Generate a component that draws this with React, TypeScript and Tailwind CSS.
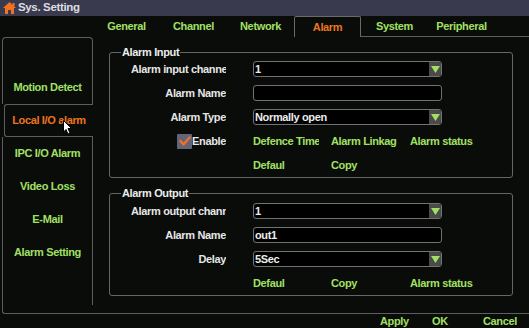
import React from "react";

const G = "text-[#a2e063]";
const LINE = "border-[#5e5e5e]";

function Arrow() {
  return (
    <div className="w-[12px] h-full bg-[#4a4a4a] flex items-center justify-center shrink-0">
      <svg width="9" height="7" viewBox="0 0 9 7">
        <polygon points="0,0 9,0 4.5,7" fill="#a2e063" />
      </svg>
    </div>
  );
}

function Field({ text, arrow }: { text?: string; arrow?: boolean }) {
  return (
    <div className="h-[16px] w-[189px] border border-[#727272] rounded-[3px] bg-black flex items-center overflow-hidden">
      <span className="flex-1 pl-[1px] text-[#ececec] whitespace-nowrap">{text}</span>
      {arrow && <Arrow />}
    </div>
  );
}

function Row({ label, children }: { label: React.ReactNode; children: React.ReactNode }) {
  return (
    <div className="h-[24px] flex items-center">
      <div className="w-[116px] pl-[21px] shrink-0">
        <div className="overflow-hidden whitespace-nowrap text-right text-[#e6e6e6]">{label}</div>
      </div>
      <div className="ml-[27px] flex items-center">{children}</div>
    </div>
  );
}

function GreenRow({ items }: { items: string[] }) {
  const widths = ["w-[66px] mr-[12px]", "w-[66px] mr-[13px]", "w-[80px]"];
  return (
    <div className="h-[24px] flex items-center">
      <div className="w-[116px] shrink-0" />
      <div className="ml-[27px] flex items-center">
        {items.map((t, i) => (
          <div key={i} className={`${widths[i]} overflow-hidden whitespace-nowrap ${G}`}>
            {t}
          </div>
        ))}
      </div>
    </div>
  );
}

function Fieldset({ title, pt, children }: { title: string; pt: string; children: React.ReactNode }) {
  return (
    <div className={`relative border border-[#666] rounded-[3px] ${pt}`}>
      <span className="absolute -top-[8px] left-[11px] bg-[#0a0c0a] px-px text-[#ececec] leading-[14px]">
        {title}
      </span>
      {children}
    </div>
  );
}

export default function App() {
  return (
    <div
      className="relative w-[529px] h-[328px] bg-[#0a0c0a] flex flex-col overflow-hidden font-bold text-[11px] tracking-[-0.35px] leading-none"
      style={{ fontFamily: '"Liberation Sans", Arial, sans-serif' }}
    >
      {/* Title bar */}
      <div className="h-[16px] bg-[#3a3a4e] flex items-center pl-[3px] shrink-0">
        <svg width="13" height="12" viewBox="0 0 13 12" className="mr-[2px]">
          <polygon points="6.5,0 13,6 11,6 11,12 8,12 8,8 5,8 5,12 2,12 2,6 0,6" fill="#f07222" />
          <rect x="9.5" y="1" width="2" height="3.5" fill="#f07222" />
        </svg>
        <span className="text-[#dcdce0] text-[11.5px]">Sys. Setting</span>
      </div>

      {/* Tabs */}
      <div className="h-[21px] flex shrink-0 pl-[93px]">
        {["General", "Channel", "Network", "Alarm", "System", "Peripheral"].map((t) =>
          t === "Alarm" ? (
            <div
              key={t}
              className="w-[67px] flex items-center justify-center border-t border-x border-[#6a6a6a] rounded-t-[2px] text-[#ec7420]"
            >
              {t}
            </div>
          ) : (
            <div
              key={t}
              className={`w-[67px] flex items-center justify-center ${G} ${
                ["System", "Peripheral"].includes(t) ? `border-b ${LINE}` : ""
              }`}
            >
              {t}
            </div>
          )
        )}
        <div className={`flex-1 border-b ${LINE}`} />
      </div>

      {/* Main */}
      <div className="h-[277px] flex shrink-0 pl-[2px]">
        {/* Sidebar */}
        <div className="w-[91px] flex flex-col shrink-0">
          <div className={`h-[67px] border-l border-t border-r ${LINE} rounded-t-[4px] pt-[33px]`}>
            <div className={`h-[33px] flex items-center justify-center ${G}`}>Motion Detect</div>
          </div>
          <div
            className={`h-[33px] ml-[2px] border-l border-t border-b ${LINE} rounded-l-[3px] flex items-center justify-center text-[#ec7420]`}
          >
            Local I/O alarm
          </div>
          <div className={`flex-1 border-l border-b ${LINE} rounded-bl-[3px]`}>
            <div className={`h-[168px] border-r ${LINE} flex flex-col`}>
              {["IPC I/O Alarm", "Video Loss", "E-Mail", "Alarm Setting"].map((t) => (
                <div key={t} className={`h-[33px] flex items-center justify-center ${G}`}>
                  {t}
                </div>
              ))}
            </div>
          </div>
        </div>

        {/* Content */}
        <div className={`flex-1 border-b ${LINE} pt-[15px] pl-[16px] pr-[16px] flex flex-col gap-[15px]`}>
          <Fieldset title="Alarm Input" pt="pt-[4px]">
            <Row label="Alarm input channel">
              <Field text="1" arrow />
            </Row>
            <Row label="Alarm Name">
              <Field />
            </Row>
            <Row label="Alarm Type">
              <Field text="Normally open" arrow />
            </Row>
            <Row
              label={
                <div className="flex items-center justify-end">
                  <div className="w-[15px] h-[15px] bg-[#646478] rounded-[1px] flex items-center justify-center">
                    <svg width="12" height="10" viewBox="0 0 12 10">
                      <polyline
                        points="1.5,5 4.5,8.5 10.5,1.5"
                        fill="none"
                        stroke="#f07222"
                        strokeWidth="2.4"
                        strokeLinecap="round"
                        strokeLinejoin="round"
                      />
                    </svg>
                  </div>
                  <span>Enable</span>
                </div>
              }
            >
              <div className="flex items-center">
                <div className={`w-[66px] mr-[12px] overflow-hidden whitespace-nowrap ${G}`}>Defence Time</div>
                <div className={`w-[66px] mr-[13px] overflow-hidden whitespace-nowrap ${G}`}>Alarm Linkage</div>
                <div className={`w-[80px] whitespace-nowrap ${G}`}>Alarm status</div>
              </div>
            </Row>
            <GreenRow items={["Defaul", "Copy"]} />
          </Fieldset>

          <Fieldset title="Alarm Output" pt="pt-[5px]">
            <Row label="Alarm output channel">
              <Field text="1" arrow />
            </Row>
            <Row label="Alarm Name">
              <Field text="out1" />
            </Row>
            <Row label="Delay">
              <Field text="5Sec" arrow />
            </Row>
            <GreenRow items={["Defaul", "Copy", "Alarm status"]} />
          </Fieldset>
        </div>
      </div>

      {/* Bottom buttons */}
      <div className={`h-[14px] flex items-center pl-[380px] ${G}`}>
        <span className="w-[52px]">Apply</span>
        <span className="w-[51px]">OK</span>
        <span>Cancel</span>
      </div>

      {/* Mouse cursor */}
      <svg
        className="absolute left-[63px] top-[120px]"
        width="10"
        height="15"
        viewBox="0 0 10 15"
      >
        <polygon
          points="0.5,0.5 0.5,12 3,9.5 5,14 7,13 5,8.5 8.5,8.5"
          fill="#ffffff"
          stroke="#000"
          strokeWidth="1"
          strokeLinejoin="round"
        />
      </svg>
    </div>
  );
}
